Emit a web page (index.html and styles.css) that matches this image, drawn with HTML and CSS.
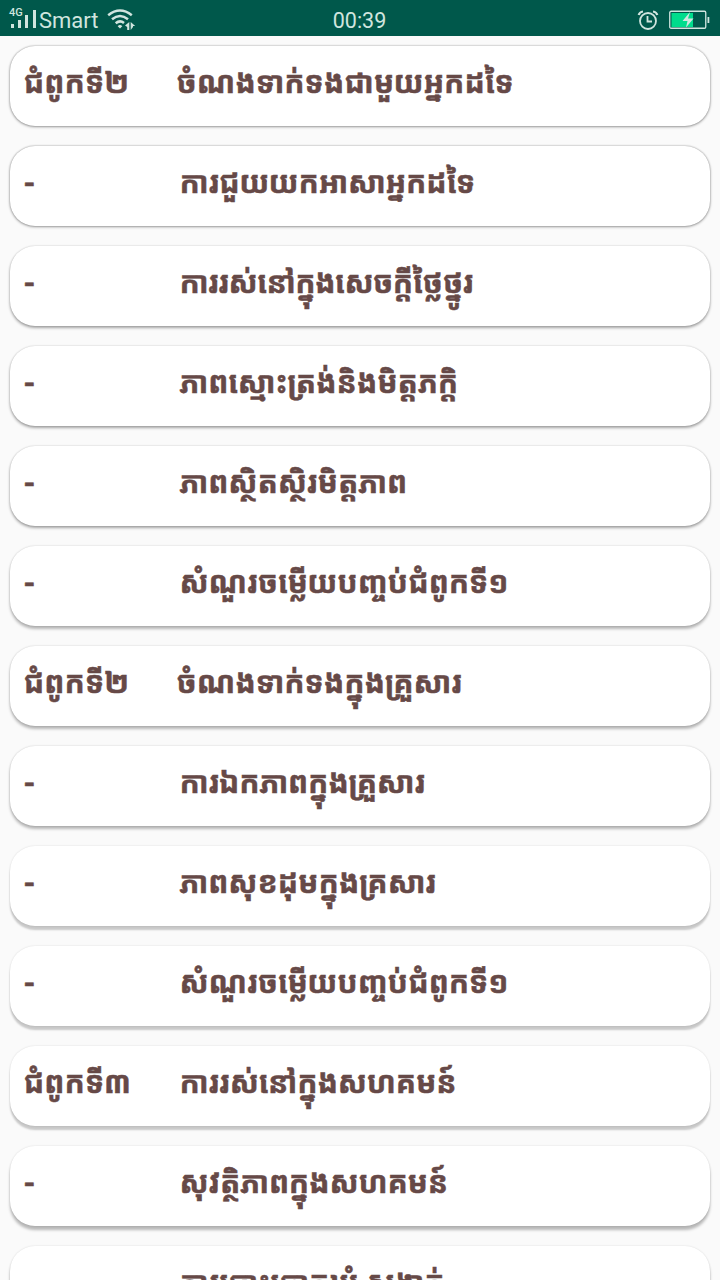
FILE: index.html
```html
<!DOCTYPE html>
<html lang="km">
<head>
<meta charset="utf-8">
<title>ជំពូក</title>
<link rel="stylesheet" href="styles.css">
</head>
<body>
<header class="status">
  <div class="network">
    <svg class="signal" width="28" height="20" viewBox="0 0 28 20">
      <path d="M2 14h3v4H2zM9 10h3v8H9zM16 5h3v13h-3zM24 0h3v18h-3z"/>
    </svg>
    <span class="generation">4G</span>
    <span class="carrier">Smart</span>
    <svg class="wifi" width="30" height="22" viewBox="0 0 30 22">
      <path class="arc" d="M1.2 6.2Q13 -3.2 24.8 6.2M5 10.3Q13 3.6 21 10.3M8.7 14.2Q13 10.6 17 14"/>
      <path d="M10.7 17.2Q13 15 15.3 17.2L13 19.6zM22.3 13v8h-2.100v-3L18 16.600zM23.700 13l4.500 4h-2.200v1l-2.300 3z"/>
    </svg>
  </div>
  <time class="clock">00:39</time>
  <div class="power">
    <svg width="22" height="21" viewBox="0 0 22 21">
      <circle class="ring" cx="11" cy="11" r="8"/>
      <path class="ring" d="M10.500 6v5.500H15"/>
      <path class="bell" d="M1.700 5Q2.500 2 6 1.500M20.300 5Q19.500 2 16 1.500"/>
    </svg>
    <svg width="41" height="20" viewBox="0 0 41 20">
      <rect class="case" x=".75" y="1.250" width="36" height="17" rx="1.300"/>
      <path class="charge" d="M2.500 3H24v14H2.500z"/>
      <path d="M38.500 7h1.800v6h-1.800z"/>
      <path d="M21 2l-7.500 9h5l-1.500 6.500 7.500-9H19z"/>
    </svg>
  </div>
</header>
<main class="list">
  <div class="card d1"><span class="chapter">ជំពូកទី២</span><span class="title heading">ចំណងទាក់ទងជាមួយអ្នកដទៃ</span></div>
  <div class="card d1"><span class="chapter">-</span><span class="title snug">ការជួយយកអាសាអ្នកដទៃ</span></div>
  <div class="card d2"><span class="chapter">-</span><span class="title tight">ការរស់នៅក្នុងសេចក្តីថ្លៃថ្នូរ</span></div>
  <div class="card d2"><span class="chapter">-</span><span class="title">ភាពស្មោះត្រង់និងមិត្តភក្តិ</span></div>
  <div class="card d2"><span class="chapter">-</span><span class="title">ភាពស្ថិតស្ថិរមិត្តភាព</span></div>
  <div class="card d3"><span class="chapter">-</span><span class="title">សំណួរចម្លើយបញ្ចប់ជំពូកទី១</span></div>
  <div class="card d3"><span class="chapter">ជំពូកទី២</span><span class="title heading">ចំណងទាក់ទងក្នុងគ្រួសារ</span></div>
  <div class="card d3"><span class="chapter">-</span><span class="title snug">ការឯកភាពក្នុងគ្រួសារ</span></div>
  <div class="card d4"><span class="chapter">-</span><span class="title">ភាពសុខដុមក្នុងគ្រសារ</span></div>
  <div class="card d4"><span class="chapter">-</span><span class="title">សំណួរចម្លើយបញ្ចប់ជំពូកទី១</span></div>
  <div class="card d4"><span class="chapter">ជំពូកទី៣</span><span class="title snug">ការរស់នៅក្នុងសហគមន៍</span></div>
  <div class="card d5"><span class="chapter">-</span><span class="title snug">សុវត្ថិភាពក្នុងសហគមន៍</span></div>
  <div class="card d5"><span class="chapter"></span><span class="title">ការបោះឆ្នោតឃុំ សង្កាត់</span></div>
</main>
</body>
</html>
```
FILE: styles.css
```css
* { box-sizing: border-box; }
body {
  margin: 0;
  height: 1280px;
  overflow: hidden;
  background: #fafafa;
  font-family: Roboto, "Noto Sans Khmer", "Khmer OS", "Noto Sans", "DejaVu Sans", sans-serif;
}
.status {
  position: relative;
  display: grid;
  grid-template-columns: 1fr auto 1fr;
  align-items: center;
  height: 36px;
  padding: 0 10px 0 9px;
  background: #00584b;
  color: #d0e5df;
}
.status svg { display: block; fill: #d0e5df; }
.network, .power { display: flex; align-items: center; }
.generation { position: absolute; left: 9px; top: 8px; font: 500 11px/10px Roboto, sans-serif; }
.carrier { margin-left: 2px; padding-top: 2px; line-height: 38px; font-size: 22px; }
.wifi { margin-left: 8px; }
.arc { fill: none; stroke: #d0e5df; stroke-width: 2.500; }
.clock { padding-top: 1px; line-height: 37px; font-size: 21.500px; }
.power { justify-content: flex-end; gap: 10px; }
.status .ring { fill: none; stroke: #d0e5df; stroke-width: 1.800; }
.status .bell { fill: none; stroke: #d0e5df; stroke-width: 2.200; }
.status .case { fill: none; stroke: #d0e5df; stroke-width: 1.300; }
.status .charge { fill: #00dc8c; }
.list { display: flex; flex-direction: column; gap: 20px; padding: 10px; }
.card {
  display: flex;
  flex: none;
  height: 80px;
  padding: 0 14px;
  border-radius: 25px;
  background: #fff;
  color: #664947;
  font-size: 30px;
  font-weight: bold;
  line-height: 74px;
  white-space: nowrap;
  -webkit-text-stroke: .5px #664947;
}
.chapter { width: 156px; margin-left: -.5px; }
.title { letter-spacing: -.1px; }
.heading { margin-left: -3px; }
.snug { letter-spacing: -.22px; }
.tight { letter-spacing: -.6px; }
.d1 { box-shadow: 0 1px 3px #0005, 0 0 2px #0005; }
.d2 { box-shadow: 0 2px 3px #0005, 0 0 2px #0003; }
.d3 { box-shadow: 0 3px 3px #0004, 0 0 2px #0003; }
.d4 { box-shadow: 0 4px 2px #0003, 0 0 2px #0002; }
.d5 { box-shadow: 0 4px 3px #0004, 0 0 2px #0002; }
```
